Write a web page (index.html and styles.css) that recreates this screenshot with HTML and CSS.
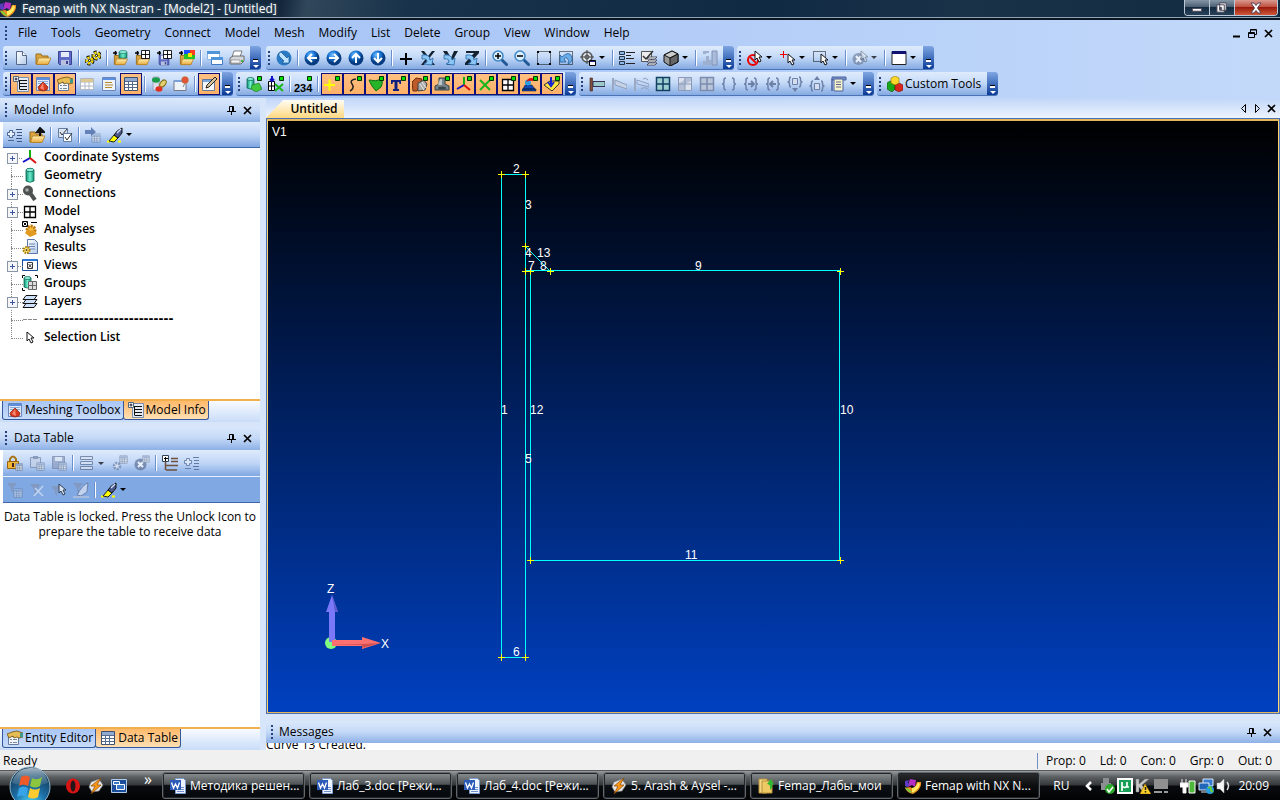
FILE: index.html
```html
<!DOCTYPE html>
<html lang="en">
<head>
<meta charset="utf-8">
<title>Femap with NX Nastran - [Model2] - [Untitled]</title>
<link rel="stylesheet" href="styles.css">
</head>
<body>
<svg class="defs" aria-hidden="true">
<defs>
<linearGradient id="g-fold" x2="0" y2="1"><stop offset="0" stop-color="#fff0b0"/><stop offset="1" stop-color="#e8a83c"/></linearGradient>
<radialGradient id="g-ball" cx=".4" cy=".3"><stop offset="0" stop-color="#7cc4ff"/><stop offset=".6" stop-color="#1470d0"/><stop offset="1" stop-color="#083c80"/></radialGradient>
<linearGradient id="g-cyl"><stop offset="0" stop-color="#128a70"/><stop offset=".5" stop-color="#6ff0d0"/><stop offset="1" stop-color="#128a70"/></linearGradient>
<linearGradient id="g-page" x2="1" y2="1"><stop offset="0" stop-color="#fff"/><stop offset="1" stop-color="#b4cbe8"/></linearGradient>
<radialGradient id="g-orb" cx=".5" cy=".95" r=".9"><stop offset="0" stop-color="#4fe0ff"/><stop offset=".45" stop-color="#1d70a8"/><stop offset="1" stop-color="#12304a"/></radialGradient>
<linearGradient id="g-shine" x2="0" y2="1"><stop offset="0" stop-color="#e8f4fa"/><stop offset="1" stop-color="#5f8aa6" stop-opacity=".4"/></linearGradient>
</defs>
<symbol id="folder" viewBox="0 0 16 16"><path d="M1 4h5l1 2h6v8H1z" fill="#d9a441" stroke="#9b6c14"/><path d="M3.500 8H16l-3 6.500H1.500z" fill="url(#g-fold)" stroke="#b07b20" stroke-width=".8"/></symbol>
<symbol id="disk" viewBox="0 0 16 16"><path d="M1.500 1.500h13v13h-12l-1-1z" fill="#5f6cc8" stroke="#3a428f"/><path d="M4 2h8v5H4z" fill="#e6ecfa"/><path d="M4 10h8v5H4z" fill="#b9c0dd"/><path d="M9 11h2v3H9z" fill="#3a428f"/></symbol>
<symbol id="minigrid" viewBox="0 0 10 10"><path d="M.5.5h9v9h-9zM5 .5v9M.5 5h9" fill="#fff" stroke="#000"/></symbol>
<symbol id="dot" viewBox="0 0 5 5"><path d="M.5.5h4v4h-4z" fill="#0d0" stroke="#030"/></symbol>
<symbol id="cursor" viewBox="0 0 9 13"><path d="M1 1v9l2-2 2 4 2-1-2-4h3z" fill="#fff" stroke="#111"/></symbol>
<symbol id="funnel" viewBox="0 0 10 10"><path d="M0 0h10L6 5v5L4 8V5z" fill="#8493b5"/></symbol>
<symbol id="new" viewBox="0 0 16 16"><path d="M3.500 1.500h6l4 4v9h-10z" fill="url(#g-page)" stroke="#56688a"/><path d="M9.500 1.500v4h4" fill="#fff" stroke="#56688a"/></symbol>
<symbol id="gears" viewBox="0 0 16 16"><g fill="none" stroke="#000" stroke-width="5" stroke-dasharray="2 1.200"><circle cx="4.500" cy="10.500" r="2.500"/><circle cx="11.500" cy="5.500" r="2.500"/></g><g fill="none" stroke="#f0d800" stroke-width="3.200" stroke-dasharray="2 1.200"><circle cx="4.500" cy="10.500" r="2.500"/><circle cx="11.500" cy="5.500" r="2.500"/></g><g fill="#fff" stroke="#000" stroke-width=".8"><circle cx="4.500" cy="10.500" r="1"/><circle cx="11.500" cy="5.500" r="1"/></g></symbol>
<symbol id="cyl" viewBox="0 0 16 16"><path d="M4 3v11q4 2.500 8 0V3" fill="url(#g-cyl)" stroke="#0a6a55" stroke-width=".8"/><ellipse cx="8" cy="3" rx="4" ry="1.700" fill="#8feedb" stroke="#0a6a55" stroke-width=".8"/></symbol>
<symbol id="cylopen" viewBox="0 0 16 16"><use href="#folder" y="2" width="15" height="14"/><path d="M6 2v6h8V2z" fill="url(#g-cyl)" stroke="#0a6a55" stroke-width=".6"/><ellipse cx="10" cy="2" rx="4" ry="1.500" fill="#8feedb" stroke="#0a6a55" stroke-width=".6"/><path d="M0 3h4M2.500 1v4" stroke="#000" stroke-width="1.500"/></symbol>
<symbol id="gridopen" viewBox="0 0 16 16"><use href="#folder" y="2" width="15" height="14"/><use href="#minigrid" x="6" y="0" width="9" height="9"/><path d="M0 3h4M2.500 1v4" stroke="#000" stroke-width="1.500"/></symbol>
<symbol id="gridsave" viewBox="0 0 16 16"><use href="#disk" x="1" y="4" width="12" height="12"/><use href="#minigrid" x="6" y="0" width="9" height="9"/><path d="M0 3h4M2.500 1v4" stroke="#000" stroke-width="1.500"/></symbol>
<symbol id="resopen" viewBox="0 0 16 16"><use href="#folder" y="2" width="15" height="14"/><path d="M5 0h11v9H5z" fill="#22c322"/><path d="M5 0h6v4H5z" fill="#1c4dff"/><path d="M11 0h5v5h-5z" fill="#ff3b1e"/><path d="M9 3h4v4H9z" fill="#ffe400"/><path d="M0 3h4M2.500 1v4" stroke="#000" stroke-width="1.500"/></symbol>
<symbol id="cascade" viewBox="0 0 16 16"><path d="M.5 1.500h12v8H.500z" fill="#fff" stroke="#8cb4e0"/><path d="M0 1h13v3H0z" fill="#4f94d8"/><path d="M4.500 7.500h11v7h-11z" fill="#fff" stroke="#3b7cc4"/><path d="M4 7h12v3H4z" fill="#4f94d8"/></symbol>
<symbol id="printer" viewBox="0 0 16 16"><path d="M5 1h8l-2 6H3z" fill="#fff" stroke="#666" stroke-width=".8"/><path d="M1 8l3-2h11v5l-3 3H1z" fill="#d3d6da" stroke="#555" stroke-width=".8"/><path d="M2 10h9v3H2z" fill="#f7f7f7" stroke="#777" stroke-width=".6"/><path d="M12 10h2v2h-2z" fill="#3ab53a"/></symbol>
<symbol id="pipe" viewBox="0 0 16 16"><circle cx="8" cy="8" r="7.500" fill="#2b7bc4"/><path d="M3 3l2-1 6 6 2-2v7H6l2-2-5-5z" fill="#bfe3ff" stroke="#17538f" stroke-width=".7"/></symbol>
<symbol id="aleft" viewBox="0 0 16 16"><circle cx="8" cy="8" r="7.500" fill="url(#g-ball)"/><path d="M13 8H5M8 4L4 8l4 4" fill="none" stroke="#fff" stroke-width="2"/></symbol>
<symbol id="aright" viewBox="0 0 16 16"><circle cx="8" cy="8" r="7.500" fill="url(#g-ball)"/><path d="M3 8h8M8 4l4 4-4 4" fill="none" stroke="#fff" stroke-width="2"/></symbol>
<symbol id="aup" viewBox="0 0 16 16"><circle cx="8" cy="8" r="7.500" fill="url(#g-ball)"/><path d="M8 13V5M4 8l4-4 4 4" fill="none" stroke="#fff" stroke-width="2"/></symbol>
<symbol id="adown" viewBox="0 0 16 16"><circle cx="8" cy="8" r="7.500" fill="url(#g-ball)"/><path d="M8 3v8M4 8l4 4 4-4" fill="none" stroke="#fff" stroke-width="2"/></symbol>
<symbol id="plus" viewBox="0 0 16 16"><path d="M2 9h12M8 3v12" stroke="#000" stroke-width="2"/></symbol>
<symbol id="swirl" viewBox="0 0 16 16"><path d="M2 5q8-1 8 5l3-2-1 7-8-1 3-2q0-4-5-3z" fill="#8cc6f5" stroke="#2668a8" stroke-width=".8"/></symbol>
<symbol id="rotx" viewBox="0 0 16 16"><path d="M1 1h3l11 14h-4zM12 1h3L4 15H1z" fill="#152231"/><use href="#swirl"/></symbol>
<symbol id="roty" viewBox="0 0 16 16"><path d="M1 1h4l4 7 3-7h4L8 15H5l2-4z" fill="#152231"/><use href="#swirl"/></symbol>
<symbol id="rotz" viewBox="0 0 16 16"><path d="M2 1h13v2L6 13h9v2H1v-2l9-10H2z" fill="#152231"/><use href="#swirl"/></symbol>
<symbol id="lens" viewBox="0 0 16 16"><path d="M9.500 9.500l5 5" stroke="#235a96" stroke-width="3" stroke-linecap="round"/><circle cx="6" cy="6" r="5" fill="#d9efff" stroke="#3d85c4" stroke-width="1.500"/></symbol>
<symbol id="zin" viewBox="0 0 16 16"><use href="#lens"/><path d="M3 6h6M6 3v6" stroke="#000" stroke-width="1.500"/></symbol>
<symbol id="zout" viewBox="0 0 16 16"><use href="#lens"/><path d="M3 6h6" stroke="#000" stroke-width="1.500"/></symbol>
<symbol id="zbox" viewBox="0 0 16 16"><path d="M1.500 1.500h13v13h-13z" fill="none" stroke="#000" stroke-dasharray="1 1"/><path d="M1 1h2v2H1zM13 1h2v2h-2zM1 13h2v2H1zM13 13h2v2h-2z" fill="#000"/></symbol>
<symbol id="zprev" viewBox="0 0 16 16"><path d="M1.500 1.500h13v13h-13z" fill="none" stroke="#000" stroke-dasharray="1 1"/><path d="M2 5l2 2q7-7 10 0 1 5-4 7 2-4-1-6-2-1-3 1l2 3H2z" fill="#69aee8" stroke="#17538f" stroke-width=".7"/></symbol>
<symbol id="target" viewBox="0 0 16 16"><circle cx="7" cy="7" r="5" fill="#dde5ee" stroke="#555" stroke-width="1.500"/><path d="M7 0v14M0 7h14" stroke="#444"/><circle cx="7" cy="7" r="2" fill="none" stroke="#444"/><path d="M9.500 10.500h6v5h-6z" fill="#fff" stroke="#000"/><path d="M10 11h5v1h-5z" fill="#228"/></symbol>
<symbol id="list" viewBox="0 0 16 16"><path d="M.5 1.500h5v3h-5zM.5 6.500h5v3h-5zM.5 11.500h5v3h-5z" fill="#8fb8e8" stroke="#234"/><path d="M7 2.500h9M7 5.500h5M7 8.500h8M7 13.500h9" stroke="#222"/></symbol>
<symbol id="layercheck" viewBox="0 0 16 16"><path d="M.5 1.500h10v10H.5z" fill="#eee" stroke="#555"/><path d="M2 6l3 3 7-8" fill="none" stroke="#333" stroke-width="1.500"/><path d="M8 7h8l-2 2H6zM8 10h8l-2 2H6zM8 13h8l-2 2H6z" fill="#fff" stroke="#334" stroke-width=".8"/></symbol>
<symbol id="cube" viewBox="0 0 16 16"><path d="M1 5l8-4 6 3v8l-8 4-6-4z" fill="#999" stroke="#111"/><path d="M1 5l6 3 8-4-6-3z" fill="#ccc" stroke="#111"/><path d="M7 8l8-4v8l-8 4z" fill="#666" stroke="#111"/></symbol>
<symbol id="post" viewBox="0 0 16 16"><path d="M1 1h6v2H4v3h3v4h2v5H1v-4h3V4H1z" fill="#9eb0cf"/><path d="M10 1h5v14h-5z" fill="#a9bbd8" stroke="#8294b8"/></symbol>
<symbol id="nosel" viewBox="0 0 16 16"><circle cx="6" cy="10" r="5" fill="none" stroke="#e00" stroke-width="2"/><path d="M3 7l6 6" stroke="#e00" stroke-width="2"/><use href="#cursor" x="7" width="9" height="13"/></symbol>
<symbol id="crosscur" viewBox="0 0 16 16"><path d="M0 4.500h7M3.500 1v7" stroke="#e00"/><use href="#cursor" x="7" y="3" width="9" height="13"/></symbol>
<symbol id="boxcur" viewBox="0 0 16 16"><path d="M.5 1.500h12v10H.5z" fill="none" stroke="#000" stroke-dasharray="1 1"/><use href="#cursor" x="7" y="3" width="9" height="13"/></symbol>
<symbol id="xcur" viewBox="0 0 16 16"><circle cx="6.500" cy="9" r="6" fill="#71839f"/><path d="M4 6l5 6M9 6l-5 6" stroke="#fff" stroke-width="2"/><use href="#cursor" x="8" opacity=".5" width="9" height="13"/></symbol>
<symbol id="win" viewBox="0 0 16 16"><path d="M1 1.500h14v13H1z" fill="#fff" stroke="#222"/><path d="M1 1h14v3H1z" fill="#101070"/></symbol>
<symbol id="tree" viewBox="0 0 16 16"><path d="M5 1.500h10.500v14H4.500V6" fill="#e4ebf5" stroke="#7d8fae"/><path d="M6.500 4v9.500M7 4.500h7M7 7.500h7M7 10.500h7M7 13.500h7" fill="none" stroke="#111"/><path d="M.5.5h5v5h-5z" fill="#fff" stroke="#567"/><path d="M1.500 3h3M3 1.500v3" stroke="#113"/></symbol>
<symbol id="drop" viewBox="0 0 16 16"><path d="M1.500 1.500h13v13h-13z" fill="#dfe9f8" stroke="#6a86b8"/><path d="M2 2h12v2H2z" fill="#5b8fe0"/><path d="M3 5.500h10M3 7.500h10" stroke="#8aa8d8"/><path d="M8 6l5 5-1 3-4 1-4-1-1-3z" fill="#d83a20" stroke="#8a1d0c" stroke-width=".7"/><path d="M8 7l1 7-4-2z" fill="#f5886e"/></symbol>
<symbol id="prop" viewBox="0 0 16 16"><path d="M1.500 6.500h10v8h-10z" fill="#f2f5fa" stroke="#667a99"/><path d="M3 9.500h2M6 9.500h4M3 12.500h2M6 12.500h4" stroke="#789"/><path d="M0 4l5-2 5-1 6 2v4l-4 1-2-1-3 1-1-2-4 2z" fill="#e6bd55" stroke="#6b4f10" stroke-width=".8"/><path d="M13 3h3v4h-3z" fill="#3f9a8a"/></symbol>
<symbol id="paletable" viewBox="0 0 16 16"><path d="M1.500 2.500h13v11h-13zM1.500 6h13M1.500 10h13M6 2.500v11M10 2.500v11" fill="#fff" stroke="#b0b8c4"/><path d="M2 3h12v3H2z" fill="#dcc890"/></symbol>
<symbol id="textlist" viewBox="0 0 16 16"><path d="M1.500 1.500h13v13h-13z" fill="#edf2fb" stroke="#6a86b8"/><path d="M2 2h12v2H2z" fill="#5b8fe0"/><path d="M4 6.500h7M4 9h8M4 11.500h7" stroke="#b28a28"/></symbol>
<symbol id="table" viewBox="0 0 16 16"><path d="M1.500 1.500h13v13h-13z" fill="#fff" stroke="#3c4f70"/><path d="M2 2h12v3H2z" fill="#8fa9d0"/><path d="M2 5.500h12M2 8.500h12M2 11.500h12M5.500 5v10M9.500 5v10" stroke="#566a8c"/></symbol>
<symbol id="beans" viewBox="0 0 16 16"><path d="M2 1h6v13H2z" fill="#dde" stroke="#88a" stroke-width=".6"/><ellipse cx="5" cy="4" rx="4" ry="2.800" fill="#1a9d4a"/><ellipse cx="12" cy="7.500" rx="4" ry="2.500" fill="#e3cf6b" stroke="#80701e" transform="rotate(-50 12 7.500)"/><ellipse cx="8" cy="13" rx="3.500" ry="2.800" fill="#e03020"/></symbol>
<symbol id="ballwin" viewBox="0 0 16 16"><path d="M1 4.500h12v10H1z" fill="#eef2f9" stroke="#778"/><path d="M1 4h12v2H1z" fill="#7aa0d8"/><path d="M12 7l-2 4" stroke="#888"/><circle cx="12" cy="4" r="3.500" fill="#e2543a" stroke="#992" stroke-width=".3"/></symbol>
<symbol id="pencil" viewBox="0 0 16 16"><path d="M1.500 3.500h12v11h-12z" fill="#f4f6fa" stroke="#667a99"/><path d="M2 4h11v2H2z" fill="#7ba6e0"/><path d="M5 12l1-3 8-8 2 2-8 8z" fill="#d6c39a" stroke="#222"/></symbol>
<symbol id="cylgreen" viewBox="0 0 16 16"><path d="M1 3v9q3 2 7 0V3" fill="url(#g-cyl)" stroke="#0a6a55" stroke-width=".8"/><ellipse cx="4.500" cy="3" rx="3.500" ry="1.500" fill="#8feedb" stroke="#0a6a55" stroke-width=".8"/><path d="M6 9l7-2 3 6-6 3-5-3z" fill="#40c840" stroke="#187018" stroke-width=".6"/><use href="#dot" x="11" width="5" height="5"/></symbol>
<symbol id="gridx" viewBox="0 0 16 16"><path d="M.5 5.500h6v9h-6zM.5 10h6M3.500 5.500v9" fill="#fff" stroke="#000"/><path d="M4 0v5M2 3l2 2 2-2" stroke="#11c" stroke-width="2" fill="none"/><path d="M7 8l8 7M15 8l-8 7" stroke="#18b818" stroke-width="2"/><use href="#dot" x="11" width="5" height="5"/></symbol>
<symbol id="yplus" viewBox="0 0 16 16"><path d="M0 9h11M5.500 3.500v11" stroke="#ff0" stroke-width="2"/><use href="#dot" x="11" width="5" height="5"/></symbol>
<symbol id="curve" viewBox="0 0 16 16"><path d="M10 3Q3 4 6 8t-2 7" fill="none" stroke="#222" stroke-width="1.500"/><use href="#dot" x="11" width="5" height="5"/></symbol>
<symbol id="surf" viewBox="0 0 16 16"><path d="M1 4q7 2 13-1 1 5-1 8l-5 4Q3 10 1 4z" fill="#28b428" stroke="#127012"/><use href="#dot" x="11" width="5" height="5"/></symbol>
<symbol id="tee" viewBox="0 0 16 16"><path d="M1 4h10v4H9.500L9 6H7.500v7H9v2H3v-2h1.500V6H3l-.5 2H1z" fill="#102080"/><use href="#dot" x="11" width="5" height="5"/></symbol>
<symbol id="solid" viewBox="0 0 16 16"><path d="M0 6l4-4 6 1-5 12H1z" fill="#bd5a28" stroke="#6a2c0e"/><path d="M6 7l6-3 3 4-2 6-7 1z" fill="#a9a9a9" stroke="#444"/><path d="M8 8l4 6M10 6l4 6" stroke="#eee"/><use href="#dot" x="11" width="5" height="5"/></symbol>
<symbol id="body" viewBox="0 0 16 16"><path d="M5 2h6v6l4 2v4H1v-4l4-2z" fill="#75838a" stroke="#39444a"/><path d="M6 3h2v6H4" fill="#b8c4ca"/><ellipse cx="8" cy="12" rx="4" ry="1.500" fill="#3a464c"/><use href="#dot" x="11" width="5" height="5"/></symbol>
<symbol id="triad" viewBox="0 0 16 16"><path d="M8 1v9" stroke="#12b012" stroke-width="2"/><path d="M8 9l-7 4" stroke="#11c" stroke-width="2"/><path d="M8 9l6 5" stroke="#d11" stroke-width="2"/></symbol>
<symbol id="triadd" viewBox="0 0 16 16"><use href="#triad"/><use href="#dot" x="11" width="5" height="5"/></symbol>
<symbol id="gx" viewBox="0 0 16 16"><path d="M2 4l10 10M12 4L2 14" stroke="#1bb51b" stroke-width="2"/><use href="#dot" x="11" width="5" height="5"/></symbol>
<symbol id="grid" viewBox="0 0 16 16"><path d="M2.500 3.500h11v11h-11zM8 3.500v11M2.500 9h11" fill="#fff" stroke="#000" stroke-width="1.300"/></symbol>
<symbol id="gridd" viewBox="0 0 16 16"><use href="#grid"/><use href="#dot" x="11" width="5" height="5"/></symbol>
<symbol id="load" viewBox="0 0 16 16"><path d="M0 13h14v2H0zM3 9h7l3 4H1z" fill="#1148b4" stroke="#012" stroke-width=".5"/><circle cx="6" cy="6.500" r="3" fill="#2b9de0"/><path d="M4 6q3-6 8-3l-1 2q-4-1-7 1z" fill="#e01010"/><use href="#dot" x="11" width="5" height="5"/></symbol>
<symbol id="laydown" viewBox="0 0 16 16"><path d="M0 9l6-4h9v3l-7 7z" fill="#ffe83a" stroke="#333"/><path d="M7 1v7M4 6l3 4 3-4" stroke="#1120d0" stroke-width="2" fill="none"/><use href="#dot" x="11" width="5" height="5"/></symbol>
<symbol id="beam" viewBox="0 0 16 16"><path d="M1 2h2.500v13H1z" fill="#80503c" stroke="#402010" stroke-width=".6"/><path d="M4 5.500h12v5H4z" fill="#9cc9c9" stroke="#335"/></symbol>
<symbol id="beam2" viewBox="0 0 16 16"><path d="M1 2h2v13H1z" fill="#9aa8c4"/><path d="M4 4l12 5v4L4 9z" fill="#c6d2e6" stroke="#8e9dbd"/></symbol>
<symbol id="beam3" viewBox="0 0 16 16"><path d="M1 2h2v13H1z" fill="#9aa8c4"/><path d="M4 4l12 4v3L4 8zM8 13q4-3 8 1M10 3q3-2 5 1" fill="none" stroke="#8e9dbd"/></symbol>
<symbol id="gteal" viewBox="0 0 16 16"><path d="M1.500 1.500h13v13h-13zM8 1.500v13M1.500 8h13" fill="#9ccfd0" stroke="#123f63" stroke-width="1.500"/></symbol>
<symbol id="contour" viewBox="0 0 16 16"><path d="M1.500 1.500h13v13h-13z" fill="#b3bfd4" stroke="#8c9aba"/><path d="M2 2h6q-2 4-6 5zM8 8l6-3v9H8z" fill="#dbe2ee"/><path d="M8 2v12M2 8h12" stroke="#8c9aba"/></symbol>
<symbol id="ggrey" viewBox="0 0 16 16"><path d="M1.500 1.500h13v13h-13zM8 1.500v13M1.500 8h13" fill="#b9c5d9" stroke="#7c8cae" stroke-width="1.500"/></symbol>
<symbol id="brace" viewBox="0 0 16 16"><path d="M5 2Q3 2 3 4v2q0 2-2 2 2 0 2 2v2q0 2 2 2M11 2q2 0 2 2v2q0 2 2 2-2 0-2 2v2q0 2-2 2" fill="none" stroke="#6d80a8" stroke-width="1.500"/></symbol>
<symbol id="bright" viewBox="0 0 16 16"><use href="#brace"/><path d="M5 8h5M8 5l3 3-3 3" fill="none" stroke="#6d80a8" stroke-width="2"/></symbol>
<symbol id="bleft" viewBox="0 0 16 16"><use href="#brace"/><path d="M11 8H6M8 5L5 8l3 3" fill="none" stroke="#6d80a8" stroke-width="2"/></symbol>
<symbol id="bdown" viewBox="0 0 16 16"><path d="M4 1Q2.500 1 2.500 3v1q0 2-2 2 2 0 2 2v1q0 2 1.500 2M12 1q1.500 0 1.500 2v1q0 2 2 2-2 0-2 2v1q0 2-1.500 2" fill="none" stroke="#6d80a8" stroke-width="1.500"/><path d="M5.500 2.500h5v6h-5z" fill="#d5deec" stroke="#6d80a8"/><path d="M5 12h6l-3 4z" fill="#6d80a8"/></symbol>
<symbol id="bup" viewBox="0 0 16 16"><path d="M4 5Q2.500 5 2.500 7v1q0 2-2 2 2 0 2 2v1q0 2 1.500 2M12 5q1.500 0 1.500 2v1q0 2 2 2-2 0-2 2v1q0 2-1.500 2" fill="none" stroke="#6d80a8" stroke-width="1.500"/><path d="M5.500 7.500h5v6h-5z" fill="#d5deec" stroke="#6d80a8"/><path d="M5 4h6L8 0z" fill="#6d80a8"/></symbol>
<symbol id="scroll" viewBox="0 0 16 16"><path d="M1 1h14v3H1z" fill="#7990cc" stroke="#4b62a0"/><path d="M3 3h9v12H3z" fill="#f4f3cc" stroke="#4b62a0"/><path d="M5 6h5M5 8.500h5M5 11h5" stroke="#668"/><path d="M1 3v12" stroke="#4b62a0" stroke-width="1.500"/></symbol>
<symbol id="blocks" viewBox="0 0 16 16"><path d="M0 7l3-2 5 2v6l-3 3-5-3z" fill="#18a818" stroke="#0a500a" stroke-width=".6"/><path d="M8 9l4-2 4 2v5l-4 2-4-2z" fill="#d8281c" stroke="#701008" stroke-width=".6"/><path d="M4 2l4-2 4 2v5L8 9 4 7z" fill="#ffd92a" stroke="#907008" stroke-width=".6"/></symbol>
<symbol id="expand" viewBox="0 0 16 16"><path d="M.5 5.500h2v-2h3v2h2v3h-2v2h-3v-2h-2zM1 13.500h6" fill="#e6effb" stroke="#4a6490"/><path d="M9 2.500h6M10 5.500h5M10 8.500h5M9 11.500h6M10 14.500h5" stroke="#3c5680"/></symbol>
<symbol id="upfold" viewBox="0 0 16 16"><use href="#folder" y="1"/><path d="M11 9V4M8 5l3-4 4 4z" fill="#111" stroke="#111" stroke-width="2"/></symbol>
<symbol id="checks" viewBox="0 0 16 16"><path d="M1.500 1.500h9v9h-9z" fill="#dce6f4" stroke="#667d9f"/><path d="M3 5l2 3 5-6" fill="none" stroke="#333"/><path d="M6.500 6.500h8v8h-8z" fill="#fff" stroke="#667d9f"/><path d="M8 10l2 3 5-7" fill="none" stroke="#333"/></symbol>
<symbol id="totable" viewBox="0 0 16 16"><path d="M0 3h6V0l5 5-5 4V7H0z" fill="#6480b8"/><use href="#table" x="6" y="6" width="10" height="10" opacity=".6"/></symbol>
<symbol id="marker" viewBox="0 0 16 16"><path d="M0 14.500h3M11 14.500h3" stroke="#ff0" stroke-width="2"/><path d="M2 14l5-6 4 3-4 4z" fill="#ff0" stroke="#222"/><path d="M7 8q3-5 8-7v5l-4 5z" fill="#4a588c" stroke="#111"/><path d="M10 6l4-4" stroke="#cfe0ff" stroke-width="1.500"/></symbol>
<symbol id="conn" viewBox="0 0 16 16"><circle cx="6" cy="5.500" r="5" fill="#4e5250"/><circle cx="5" cy="5" r="1.800" fill="#a5aaa8"/><path d="M8 8l5 7" stroke="#4e5250" stroke-width="4"/></symbol>
<symbol id="analysis" viewBox="0 0 16 16"><circle cx="9" cy="9" r="4" fill="#f4bc40" stroke="#c07a10" stroke-width="3" stroke-dasharray="2 1"/><path d="M3 12l5 4 7-3-2-3-8-1z" fill="#e09a20"/><path d="M.5.5h5v5h-5z" fill="#fff" stroke="#000"/><path d="M1.500 1.500l3 3M4.500 1.500l-3 3M9 1.500h6" stroke="#000"/></symbol>
<symbol id="results" viewBox="0 0 16 16"><path d="M5.500.5h7l3 3v11h-10z" fill="url(#g-page)" stroke="#5b76a8"/><path d="M7 5h6M7 7.500h6M7 10h6" stroke="#6a84b4"/><circle cx="4.500" cy="11" r="3" fill="#ffe978" stroke="#a87800" stroke-width="2" stroke-dasharray="1.500 1"/><circle cx="4.500" cy="11" r="1" fill="#543"/></symbol>
<symbol id="views" viewBox="0 0 16 16"><path d="M.5 2.500h15v11H.5z" fill="#fff" stroke="#1c4f9c"/><path d="M1 2h14v2H1z" fill="#2d77d8"/><path d="M5.500 5.500h5v6h-5zM6.500 7l3 3.500M9.500 7l-3 3.500" fill="none" stroke="#222" stroke-width=".9"/></symbol>
<symbol id="groups" viewBox="0 0 16 16"><path d="M2 3v9q3 2 7 0V3" fill="url(#g-cyl)" stroke="#0a6a55" stroke-width=".8"/><ellipse cx="5.500" cy="3" rx="3.500" ry="1.500" fill="#8feedb" stroke="#0a6a55" stroke-width=".8"/><path d="M6.500 6.500h8v8h-8zM10.500 6.500v8M6.500 10.500h8" fill="#ddd" stroke="#666"/><path d="M.5 3V.5H3M13 .5h2.500V3M.5 13v2.500H3" fill="none" stroke="#000"/></symbol>
<symbol id="layers" viewBox="0 0 16 16"><g fill="#cfe0fa" stroke="#111"><path d="M4 10.500h11l-3 4H1z"/><path d="M4 6.500h11l-3 4H1z"/><path d="M4 2.500h11l-3 4H1z"/></g></symbol>
<symbol id="dashes" viewBox="0 0 16 16"><path d="M1 8.500h14" stroke="#888" stroke-dasharray="4 1"/></symbol>
<symbol id="selcur" viewBox="0 0 16 16"><use href="#cursor" x="4" y="2" width="9" height="13"/></symbol>
<symbol id="lock" viewBox="0 0 16 16"><path d="M3 7V4q3-5 6 0v3" fill="none" stroke="#a87414" stroke-width="2"/><path d="M.5 6.500h11v7H.5z" fill="#f2b737" stroke="#95640c"/><path d="M6 8v4" stroke="#422" stroke-width="2"/><use href="#table" x="8" y="8" width="8" height="8"/></symbol>
<symbol id="paste" viewBox="0 0 16 16"><path d="M1.500 2.500h10v10h-10z" fill="#c3cfe4" stroke="#6f80a5"/><path d="M4 1h5v3H4z" fill="#6f80a5"/><use href="#table" x="7" y="7" width="9" height="9"/></symbol>
<symbol id="savet" viewBox="0 0 16 16"><path d="M1.500 1.500h12v12h-12z" fill="#8c9cbd" stroke="#6f80a5"/><path d="M4 2h7v4H4z" fill="#e2e9f4"/><use href="#table" x="7" y="7" width="9" height="9"/></symbol>
<symbol id="rows" viewBox="0 0 16 16"><path d="M1.500 1.500h12v3h-12zM1.500 6.500h12v3h-12zM1.500 11.500h12v3h-12z" fill="#dbe4f2" stroke="#55688f"/></symbol>
<symbol id="gearT" viewBox="0 0 16 16"><circle cx="5" cy="11" r="3" fill="#dfe6f2" stroke="#6f80a5" stroke-width="2.500" stroke-dasharray="2 1"/><use href="#table" x="7" y="0" width="9" height="9"/></symbol>
<symbol id="xT" viewBox="0 0 16 16"><circle cx="6.500" cy="9.500" r="6" fill="#5f7298"/><path d="M4 7l5 5M9 7l-5 5" stroke="#fff" stroke-width="2"/><use href="#table" x="8" y="0" width="8" height="8"/></symbol>
<symbol id="treeadd" viewBox="0 0 16 16"><path d="M3.500 6v9M4 10.500h12M4 15h11M9 3.500h7M9 6.500h7" stroke="#6e503c" stroke-width="1.500"/><path d="M.5.500h6v6h-6z" fill="#fff" stroke="#345"/><path d="M2 3.500h4M3.500 2v4" stroke="#000"/></symbol>
<symbol id="ft" viewBox="0 0 16 16"><use href="#funnel" y="1" width="10" height="10"/><use href="#table" x="6" y="6" width="10" height="10" opacity=".7"/></symbol>
<symbol id="fx" viewBox="0 0 16 16"><use href="#funnel" x="1" y="2" width="11" height="11"/><path d="M6 6l8 8M14 4L5 14" stroke="#dfe8f6" stroke-width="1.500"/></symbol>
<symbol id="fc" viewBox="0 0 16 16"><use href="#funnel" y="4" width="10" height="10"/><use href="#cursor" x="7" y="1" width="9" height="13"/></symbol>
<symbol id="fm" viewBox="0 0 16 16"><use href="#funnel" x="0" y="1" width="10" height="10"/><path d="M4 13q6-11 11-12l-1 9-6 4z" fill="#dce5f2" stroke="#5f7095"/><path d="M0 15h16" stroke="#b8c6de" stroke-width="2"/></symbol>
<symbol id="pin" viewBox="0 0 9 9"><path d="M2.500.5h4v5h-4zM0 5.500h9M4.500 6v3M5.500 1v4" fill="none" stroke="#000"/></symbol>
<symbol id="x" viewBox="0 0 9 9"><path d="M1 1l7 7M8 1L1 8" stroke="#000" stroke-width="1.700"/></symbol>
<symbol id="femap" viewBox="0 0 16 16"><path d="M0 10l5-1 4 2 3-7 4 0q1 7-8 12-6-1-8-6z" fill="#f08c1a"/><path d="M7 10q5-1 6-6l2 2q-1 6-8 9z" fill="#ffe95c"/><path d="M0 9l4 2 4 4-4-1q-3-2-4-5z" fill="#7cc83c"/><path d="M4 4l1-3 6 1-1 7-3-2-4 2-2-2 3-2z" fill="#b52fc4"/><path d="M0 3l4-1-1 3 2 1-3 3-2-1z" fill="#5a3cc0"/></symbol>
<symbol id="word" viewBox="0 0 16 16"><path d="M5.500.5h8l2 2v13h-10z" fill="#eef4ff" stroke="#7b9bd0"/><path d="M7 9.500h7M7 11.500h7M7 13.500h7" stroke="#6f8fca"/><path d="M0 2h11v10H0z" fill="#2c5bb8"/><path d="M1.500 4.500L3.500 10l2-4 2 4 2-5.500" fill="none" stroke="#fff" stroke-width="1.300"/></symbol>
<symbol id="amp" viewBox="0 0 16 16"><path d="M3 4l8-3 4 6-4 6-7 1-3-5z" fill="#e6e6e6" stroke="#777" stroke-width=".7"/><path d="M13 0L3 8h4L3 16l10-9H9z" fill="#ff9a18" stroke="#8a4600" stroke-width=".7"/></symbol>
<symbol id="upfolder" viewBox="0 0 16 16"><path d="M1 1h8v14H1z" fill="#f5d885" stroke="#b8903a"/><path d="M4 3h10v12H4z" fill="#efc964" stroke="#b8903a"/><path d="M12 12q1-6-3-6l4-5 3 6-2-1q1 4-2 6z" fill="#30b830"/></symbol>
<symbol id="opera" viewBox="0 0 16 16"><ellipse cx="8" cy="8" rx="7" ry="7.500" fill="#d81414"/><ellipse cx="8" cy="8" rx="2.500" ry="5.500" fill="#251518"/></symbol>
<symbol id="switch" viewBox="0 0 16 16"><path d="M.5 1.500h15v13H.5z" fill="#1b4d9a" stroke="#aecbea"/><path d="M2.500 3.500h6v3h-6zM5.500 6.500h8v5h-8z" fill="#3c78c8" stroke="#fff"/></symbol>
<symbol id="usb" viewBox="0 0 16 16"><path d="M4 0h6v5H4zM2 5h10v7H2z" fill="#8b8e92"/><circle cx="11" cy="11" r="5" fill="#2cab2c"/><path d="M8 11l2 3 4-5" fill="none" stroke="#fff" stroke-width="1.500"/></symbol>
<symbol id="mu" viewBox="0 0 16 16"><path d="M1 1h14v14H1z" fill="#18a058" stroke="#fff" stroke-width="2"/><path d="M5 4v9M5 8q3 3 5 0M10 4v5h2" fill="none" stroke="#fff" stroke-width="1.700"/></symbol>
<symbol id="kav" viewBox="0 0 16 16"><path d="M1 1h3v5l6-5h4L7 7l5 7H8L4 9v5H1z" fill="#c6c6c6" stroke="#777" stroke-width=".5"/><path d="M10 6l6 10H5z" fill="#ffd12a" stroke="#a77900" stroke-width=".6"/><path d="M10.500 9v3M10.500 13v1.500" stroke="#222" stroke-width="1.500"/></symbol>
<symbol id="screen" viewBox="0 0 16 16"><path d="M1 1h14v10H1z" fill="#909090"/><path d="M1 14h8M11 14h4" stroke="#999" stroke-width="2"/></symbol>
<symbol id="power" viewBox="0 0 16 16"><path d="M2 1v4M6 1v4M0 5h8v4H6v6H3V9H0z" fill="#fff" stroke="#eee"/><path d="M9 3h6v12H9z" fill="#4db83a" stroke="#fff"/></symbol>
<symbol id="net" viewBox="0 0 16 16"><path d="M5 1h10v7H5z" fill="#377bd0" stroke="#dbe9fa"/><path d="M1 5h10v7H1zM3 14h6" fill="#2266b8" stroke="#dbe9fa"/><circle cx="12" cy="12" r="4" fill="#289de0"/><path d="M10 10q3-2 3 1t2 2" stroke="#6c3" stroke-width="2" fill="none"/></symbol>
<symbol id="vol" viewBox="0 0 16 16"><path d="M1 5h3l4-4v14l-4-4H1z" fill="#f5f5f5" stroke="#bbb" stroke-width=".5"/><path d="M11 4q3 4 0 8" stroke="#ddd" fill="none" stroke-width="1.500"/></symbol>
</svg>

<div class="app">
<header class="title">
  <svg class="ic"><use href="#femap"/></svg>
  <h1>Femap with NX Nastran - [Model2] - [Untitled]</h1>
  <div class="caption">
    <button aria-label="Minimize"><svg viewBox="0 0 26 14"><path d="M8 7.500h10v3H8z" fill="#fff" stroke="#445"/></svg></button>
    <button aria-label="Restore"><svg viewBox="0 0 26 14"><path d="M10.500 1.500h7v8h-7zM7.500 3.500h8v8h-8z" fill="#f4f4f4" stroke="#445"/><path d="M10.500 6.500h2v2h-2z" fill="#567" stroke="#445"/></svg></button>
    <button class="close" aria-label="Close"><svg viewBox="0 0 26 14"><path d="M8 2h3l2 2.500L15 2h3l-3.500 5 3.500 5h-3l-2-2.500L11 12H8l3.500-5z" fill="#fff" stroke="#545"/></svg></button>
  </div>
</header>

<nav class="menu">
  <i class="grip"></i>
  <button>File</button><button>Tools</button><button>Geometry</button><button>Connect</button><button>Model</button><button>Mesh</button><button>Modify</button><button>List</button><button>Delete</button><button>Group</button><button>View</button><button>Window</button><button>Help</button>
  <div class="mdi">
    <button aria-label="Minimize document"><svg viewBox="0 0 9 9"><path d="M1 7.500h7" stroke="#000" stroke-width="2"/></svg></button>
    <button aria-label="Restore document"><svg viewBox="0 0 9 9"><path d="M2.500 3V.5h6v5H7M.5 3.500h6v5h-6zM2 1h6M1 4.500h5" fill="none" stroke="#000"/></svg></button>
    <button aria-label="Close document"><svg><use href="#x"/></svg></button>
  </div>
</nav>

<div class="bars">
 <div class="barrow">
  <div class="bar">
   <i class="grip"></i>
   <button class="tb" aria-label="New"><svg><use href="#new"/></svg></button>
   <button class="tb" aria-label="Open"><svg><use href="#folder"/></svg></button>
   <button class="tb" aria-label="Save"><svg><use href="#disk"/></svg></button>
   <i class="sep"></i>
   <button class="tb" aria-label="Preferences"><svg><use href="#gears"/></svg></button>
   <i class="sep"></i>
   <button class="tb" aria-label="Import geometry"><svg><use href="#cylopen"/></svg></button>
   <button class="tb" aria-label="Import model"><svg><use href="#gridopen"/></svg></button>
   <button class="tb" aria-label="Export model"><svg><use href="#gridsave"/></svg></button>
   <button class="tb" aria-label="Import results"><svg><use href="#resopen"/></svg></button>
   <i class="sep"></i>
   <button class="tb" aria-label="Windows"><svg><use href="#cascade"/></svg></button>
   <button class="tb" aria-label="Print"><svg><use href="#printer"/></svg></button>
   <button class="cap" aria-label="More standard buttons"></button>
  </div>
  <div class="bar gap">
   <i class="grip"></i>
   <button class="tb" aria-label="Redraw"><svg><use href="#pipe"/></svg></button>
   <i class="sep"></i>
   <button class="tb" aria-label="Pan left"><svg><use href="#aleft"/></svg></button>
   <button class="tb" aria-label="Pan right"><svg><use href="#aright"/></svg></button>
   <button class="tb" aria-label="Pan up"><svg><use href="#aup"/></svg></button>
   <button class="tb" aria-label="Pan down"><svg><use href="#adown"/></svg></button>
   <i class="sep"></i>
   <button class="tb" aria-label="Center"><svg><use href="#plus"/></svg></button>
   <button class="tb" aria-label="Rotate X"><svg><use href="#rotx"/></svg></button>
   <button class="tb" aria-label="Rotate Y"><svg><use href="#roty"/></svg></button>
   <button class="tb" aria-label="Rotate Z"><svg><use href="#rotz"/></svg></button>
   <i class="sep"></i>
   <button class="tb" aria-label="Zoom in"><svg><use href="#zin"/></svg></button>
   <button class="tb" aria-label="Zoom out"><svg><use href="#zout"/></svg></button>
   <button class="tb" aria-label="Zoom box"><svg><use href="#zbox"/></svg></button>
   <button class="tb" aria-label="Unzoom"><svg><use href="#zprev"/></svg></button>
   <button class="tb dd" aria-label="Orient"><svg><use href="#target"/></svg></button>
   <i class="sep"></i>
   <button class="tb" aria-label="View options"><svg><use href="#list"/></svg></button>
   <button class="tb" aria-label="Visibility"><svg><use href="#layercheck"/></svg></button>
   <button class="tb dd" aria-label="View style"><svg><use href="#cube"/></svg></button>
   <i class="sep"></i>
   <button class="tb" aria-label="Post options"><svg><use href="#post"/></svg></button>
   <button class="cap" aria-label="More view buttons"></button>
  </div>
  <div class="bar">
   <i class="grip"></i>
   <button class="tb dd" aria-label="Selector"><svg><use href="#nosel"/></svg></button>
   <button class="tb dd" aria-label="Snap mode"><svg><use href="#crosscur"/></svg></button>
   <button class="tb dd" aria-label="Pick mode"><svg><use href="#boxcur"/></svg></button>
   <i class="sep"></i>
   <button class="tb dd off" aria-label="Clear selection"><svg><use href="#xcur"/></svg></button>
   <i class="sep"></i>
   <button class="tb dd" aria-label="Dialog"><svg><use href="#win"/></svg></button>
   <button class="cap" aria-label="More select buttons"></button>
  </div>
 </div>
 <div class="barrow">
  <div class="bar">
   <i class="grip"></i>
   <button class="tb on" aria-label="Model Info pane"><svg><use href="#tree"/></svg></button>
   <button class="tb on" aria-label="Meshing Toolbox pane"><svg><use href="#drop"/></svg></button>
   <button class="tb on" aria-label="Entity Editor pane"><svg><use href="#prop"/></svg></button>
   <button class="tb" aria-label="Program window"><svg><use href="#paletable"/></svg></button>
   <button class="tb" aria-label="API window"><svg><use href="#textlist"/></svg></button>
   <button class="tb on" aria-label="Data Table pane"><svg><use href="#table"/></svg></button>
   <i class="sep"></i>
   <button class="tb" aria-label="Colors"><svg><use href="#beans"/></svg></button>
   <button class="tb" aria-label="Macro"><svg><use href="#ballwin"/></svg></button>
   <i class="sep"></i>
   <button class="tb on" aria-label="Messages pane"><svg><use href="#pencil"/></svg></button>
   <button class="cap" aria-label="More pane buttons"></button>
  </div>
  <div class="bar">
   <i class="grip"></i>
   <button class="tb" aria-label="Toggle geometry"><svg><use href="#cylgreen"/></svg></button>
   <button class="tb" aria-label="Toggle mesh"><svg><use href="#gridx"/></svg></button>
   <i class="sep"></i>
   <button class="tb num" aria-label="Toggle labels"><svg><use href="#dot" x="11" width="5" height="5"/></svg><b>234</b></button>
   <i class="sep"></i>
   <button class="tb on" aria-label="Points"><svg><use href="#yplus"/></svg></button>
   <button class="tb on" aria-label="Curves"><svg><use href="#curve"/></svg></button>
   <button class="tb on" aria-label="Surfaces"><svg><use href="#surf"/></svg></button>
   <button class="tb on" aria-label="Text"><svg><use href="#tee"/></svg></button>
   <button class="tb on" aria-label="Boundaries"><svg><use href="#solid"/></svg></button>
   <button class="tb on" aria-label="Solids"><svg><use href="#body"/></svg></button>
   <button class="tb on" aria-label="Coordinate systems"><svg><use href="#triadd"/></svg></button>
   <button class="tb on" aria-label="Nodes"><svg><use href="#gx"/></svg></button>
   <button class="tb on" aria-label="Elements"><svg><use href="#gridd"/></svg></button>
   <button class="tb on" aria-label="Constraints"><svg><use href="#load"/></svg></button>
   <button class="tb on" aria-label="Loads"><svg><use href="#laydown"/></svg></button>
   <button class="cap" aria-label="More entity buttons"></button>
  </div>
  <div class="bar">
   <i class="grip"></i>
   <button class="tb" aria-label="Undeformed"><svg><use href="#beam"/></svg></button>
   <button class="tb" aria-label="Deformed"><svg><use href="#beam2"/></svg></button>
   <button class="tb" aria-label="Animate"><svg><use href="#beam3"/></svg></button>
   <button class="tb" aria-label="No contour"><svg><use href="#gteal"/></svg></button>
   <button class="tb" aria-label="Contour"><svg><use href="#contour"/></svg></button>
   <button class="tb" aria-label="Criteria"><svg><use href="#ggrey"/></svg></button>
   <button class="tb" aria-label="Output set"><svg><use href="#brace"/></svg></button>
   <button class="tb" aria-label="Next output"><svg><use href="#bright"/></svg></button>
   <button class="tb" aria-label="Previous output"><svg><use href="#bleft"/></svg></button>
   <button class="tb" aria-label="Next vector"><svg><use href="#bdown"/></svg></button>
   <button class="tb" aria-label="Previous vector"><svg><use href="#bup"/></svg></button>
   <button class="tb dd" aria-label="Post list"><svg><use href="#scroll"/></svg></button>
   <button class="cap" aria-label="More post buttons"></button>
  </div>
  <div class="bar">
   <i class="grip"></i>
   <button class="tb custom"><svg><use href="#blocks"/></svg>Custom Tools</button>
   <button class="cap" aria-label="More custom buttons"></button>
  </div>
 </div>
</div>

<div class="work">
 <aside class="side">
  <section class="pane">
   <div class="phead"><i class="grip"></i><h2>Model Info</h2><button aria-label="Pin Model Info"><svg><use href="#pin"/></svg></button><button aria-label="Close Model Info"><svg><use href="#x"/></svg></button></div>
   <div class="ptools">
    <button class="tb" aria-label="Expand"><svg><use href="#expand"/></svg></button>
    <button class="tb" aria-label="Up folder"><svg><use href="#upfold"/></svg></button>
    <i class="sep"></i>
    <button class="tb" aria-label="Check items"><svg><use href="#checks"/></svg></button>
    <i class="sep"></i>
    <button class="tb" aria-label="Send to table"><svg><use href="#totable"/></svg></button>
    <button class="tb dd" aria-label="Highlight"><svg><use href="#marker"/></svg></button>
   </div>
   <ul class="tree">
    <li class="exp"><svg><use href="#triad"/></svg>Coordinate Systems</li>
    <li><svg><use href="#cyl"/></svg>Geometry</li>
    <li class="exp"><svg><use href="#conn"/></svg>Connections</li>
    <li class="exp"><svg><use href="#grid"/></svg>Model</li>
    <li><svg><use href="#analysis"/></svg>Analyses</li>
    <li><svg><use href="#results"/></svg>Results</li>
    <li class="exp"><svg><use href="#views"/></svg>Views</li>
    <li><svg><use href="#groups"/></svg>Groups</li>
    <li class="exp"><svg><use href="#layers"/></svg>Layers</li>
    <li class="rule"><svg><use href="#dashes"/></svg>--------------------------</li>
    <li><svg><use href="#selcur"/></svg>Selection List</li>
   </ul>
   <div class="tabs"><button><svg><use href="#drop"/></svg>Meshing Toolbox</button><button class="act"><svg><use href="#tree"/></svg>Model Info</button></div>
  </section>
  <section class="pane data">
   <div class="phead"><i class="grip"></i><h2>Data Table</h2><button aria-label="Pin Data Table"><svg><use href="#pin"/></svg></button><button aria-label="Close Data Table"><svg><use href="#x"/></svg></button></div>
   <div class="ptools tall">
    <button class="tb" aria-label="Unlock"><svg><use href="#lock"/></svg></button>
    <button class="tb off" aria-label="Paste"><svg><use href="#paste"/></svg></button>
    <button class="tb off" aria-label="Save table"><svg><use href="#savet"/></svg></button>
    <i class="sep"></i>
    <button class="tb dd off" aria-label="Rows"><svg><use href="#rows"/></svg></button>
    <button class="tb off" aria-label="Table options"><svg><use href="#gearT"/></svg></button>
    <button class="tb off" aria-label="Clear table"><svg><use href="#xT"/></svg></button>
    <i class="sep"></i>
    <button class="tb" aria-label="Add level"><svg><use href="#treeadd"/></svg></button>
    <button class="tb off" aria-label="Expand rows"><svg><use href="#expand"/></svg></button>
   </div>
   <div class="ptools flat">
    <button class="tb off" aria-label="Filter table"><svg><use href="#ft"/></svg></button>
    <button class="tb off" aria-label="Clear filter"><svg><use href="#fx"/></svg></button>
    <button class="tb off" aria-label="Filter pick"><svg><use href="#fc"/></svg></button>
    <button class="tb off" aria-label="Filter highlight"><svg><use href="#fm"/></svg></button>
    <i class="sep"></i>
    <button class="tb dd" aria-label="Highlight rows"><svg><use href="#marker"/></svg></button>
   </div>
   <p class="note">Data Table is locked. Press the Unlock Icon to prepare the table to receive data</p>
   <div class="tabs"><button><svg><use href="#prop"/></svg>Entity Editor</button><button class="act"><svg><use href="#table"/></svg>Data Table</button></div>
  </section>
 </aside>

 <main class="main">
  <div class="doctabs">
   <button class="doctab">Untitled</button>
   <div class="docnav">
    <button aria-label="Previous tab"><svg viewBox="0 0 9 9"><path d="M6.500.5v8l-4-4z" fill="none" stroke="#000"/></svg></button>
    <button aria-label="Next tab"><svg viewBox="0 0 9 9"><path d="M2.500.5v8l4-4z" fill="none" stroke="#000"/></svg></button>
    <button aria-label="Close tab"><svg><use href="#x"/></svg></button>
   </div>
  </div>
  <div class="view">
   <svg class="model" role="img" aria-label="Model view">
    <g transform="translate(-268 -121)">
     <g class="curves">
      <path d="M501.500 174V657M525.500 174V657M501 174.500H526M501 657.500H526M525 270.500H840M530.500 271V560M530 560.500H840M839.500 271V560M525.500 246.500L550.500 271.500"/>
     </g>
     <path class="points" d="M498 174.500h7M501.500 171v7M522 174.500h7M525.500 171v7M522 246.500h7M525.500 243v7M522 271.500h7M525.500 268v7M527 271.500h7M530.500 268v7M547 271.500h7M550.500 268v7M837 271.500h7M840.500 268v7M527 560.500h7M530.500 557v7M837 560.500h7M840.500 557v7M498 657.500h7M501.500 654v7M522 657.500h7M525.500 654v7"/>
     <g class="labels">
      <text x="272" y="136">V1</text>
      <text x="513" y="173">2</text><text x="525" y="209">3</text><text x="525" y="257">4</text><text x="537" y="257">13</text>
      <text x="528" y="270">7</text><text x="540" y="270">8</text><text x="695" y="270">9</text><text x="501" y="414">1</text>
      <text x="530" y="414">12</text><text x="840" y="414">10</text><text x="525" y="463">5</text><text x="685" y="559">11</text><text x="513" y="656">6</text>
      <text x="327" y="593">Z</text><text x="381" y="648">X</text>
     </g>
     <circle cx="331" cy="643" r="6" fill="#80ff80"/>
     <path d="M329 642V612h-3l6-17 6 17h-3v30z" fill="#7878f8"/><path d="M335 612h3l-6-17z" fill="#5c5ccc"/>
     <path d="M332 640h30v-3l19 6-19 6v-3h-30z" fill="#ff7070"/><path d="M332 645h30v3l18-5-18 1z" fill="#d05050"/>
    </g>
   </svg>
  </div>
  <section class="messages">
   <div class="phead"><i class="grip"></i><h2>Messages</h2><button aria-label="Pin Messages"><svg><use href="#pin"/></svg></button><button aria-label="Close Messages"><svg><use href="#x"/></svg></button></div>
   <div class="log"><p>Curve 13 Created.</p></div>
  </section>
 </main>
</div>

<footer class="status"><span class="ready">Ready</span><div class="counts"><span>Prop: 0</span><span>Ld: 0</span><span>Con: 0</span><span>Grp: 0</span><span>Out: 0</span></div></footer>

<div class="task">
 <button class="orb" aria-label="Start"><svg viewBox="0 0 42 42"><circle cx="21" cy="21" r="20" fill="url(#g-orb)" stroke="#8fb3c8"/><path d="M3 17Q6 3 21 2t18 15q-18 6-36 0z" fill="url(#g-shine)" opacity=".7"/><path d="M12 11q4-3 9 0l-2 9q-5-3-9 0z" fill="#ef5a28"/><path d="M23 12q5 3 10-1l-2 9q-5 3-10 0z" fill="#8cc63e"/><path d="M10 22q4-3 9 0l-2 9q-5-3-9 0z" fill="#38a4e8"/><path d="M21 22q5 3 10 0l-2 9q-5 3-10 0z" fill="#ffcb2e"/></svg></button>
 <div class="quick">
  <button aria-label="Opera"><svg><use href="#opera"/></svg></button>
  <button aria-label="Player"><svg><use href="#amp"/></svg></button>
  <button aria-label="Switch windows"><svg><use href="#switch"/></svg></button>
  <button class="more">»</button>
 </div>
 <div class="tasks">
  <button><svg><use href="#word"/></svg>Методика решен...</button>
  <button><svg><use href="#word"/></svg>Лаб_3.doc [Режи...</button>
  <button><svg><use href="#word"/></svg>Лаб_4.doc [Режи...</button>
  <button><svg><use href="#amp"/></svg>5. Arash &amp; Aysel -...</button>
  <button><svg><use href="#upfolder"/></svg>Femap_Лабы_мои</button>
  <button class="cur"><svg><use href="#femap"/></svg>Femap with NX N...</button>
 </div>
 <div class="tray">
  <span class="lang">RU</span>
  <button aria-label="Show hidden icons"><svg viewBox="0 0 16 16"><path d="M10 4L6 8l4 4" fill="none" stroke="#fff" stroke-width="2.500"/></svg></button>
  <svg><use href="#usb"/></svg><svg><use href="#mu"/></svg><svg><use href="#kav"/></svg><svg><use href="#screen"/></svg>
  <svg class="brk"><use href="#power"/></svg><svg><use href="#net"/></svg><svg><use href="#vol"/></svg>
  <time>20:09</time>
 </div>
</div>
</div>
</body>
</html>
```
FILE: styles.css
```css
* { box-sizing: border-box; }
body { margin: 0; font: 12px/16px "Open Sans", "Noto Sans", sans-serif; color: #000; }
button { font: inherit; color: inherit; border: 0; padding: 0; margin: 0; background: none; white-space: nowrap; }
h1, h2, p, ul { margin: 0; padding: 0; font-size: 12px; font-weight: 400; }
svg { width: 16px; height: 16px; flex: none; display: block; }
.defs { position: absolute; width: 0; height: 0; }
.app { height: 100vh; display: flex; flex-direction: column; overflow: hidden; background: #bdd4f8; }

.title { height: 20px; display: flex; align-items: center; gap: 6px; color: #fff; background: linear-gradient(100deg, #15293f, #1d3a52 8%, #14273c 22%, #31475a 24%, #17324a 32%, #112a44 60%, #1a3248 75%, #102a40); border-bottom: 2px solid #0a1520; box-shadow: inset 0 -1px #8fa3b4; }
.title h1 { flex: 1; text-shadow: 0 0 3px #6a8090; }
.caption { display: flex; align-self: flex-start; margin-right: 2px; border: 1px solid #b9c8d4; border-top: 0; border-radius: 0 0 4px 4px; overflow: hidden; }
.caption button { width: 25px; height: 15px; background: linear-gradient(#8696a6, #4c6074 45%, #132a40 50%, #27425a); border-right: 1px solid #b9c8d4; }
.caption svg { width: 100%; height: 14px; }
.caption .close { width: 42px; border: 0; background: linear-gradient(#d99a90, #c0503f 45%, #9a1c0c 50%, #d0583a); }

.menu { height: 26px; display: flex; align-items: center; padding: 0 7px 0 5px; background: linear-gradient(90deg, #9fbff5, #c3d9fa); }
.menu > button { padding: 0 7px; }
.menu .grip { margin-right: 4px; }
.mdi { margin-left: auto; display: flex; gap: 7px; }
.mdi svg, .phead svg, .docnav svg { width: 9px; height: 9px; }
.grip { flex: none; width: 2px; height: 14px; background: repeating-linear-gradient(#27417c 0 2px, transparent 2px 4px); }

.bars { background: linear-gradient(90deg, #9fbff5, #c3d9fa); padding-left: 3px; }
.barrow { display: flex; height: 26px; gap: 3px; }
.bar { height: 24px; display: flex; align-items: center; padding-left: 2px; border-radius: 3px; background: linear-gradient(#dfebfc, #c6dbf8 45%, #85aae2); border-bottom: 1px solid #4a74b6; }
.bar.gap { margin-left: 2px; }
.bar .grip { margin-right: 3px; }
.tb { position: relative; width: 22px; height: 22px; flex: none; display: flex; align-items: center; padding-left: 3px; }
.tb.on { background: linear-gradient(#ffc184, #ffb066); outline: 1px solid #10107c; outline-offset: -1px; }
.tb.dd { width: 33px; gap: 3px; }
.tb.dd::after { content: ""; border: 3px solid transparent; border-top-color: #000; margin-top: 3px; }
.tb.off { opacity: .7; }
.tb.custom { width: auto; padding: 0 4px 0 3px; gap: 2px; }
.tb.num b { position: absolute; left: 1px; bottom: 1px; font: 700 11px/12px "Liberation Sans", sans-serif; }
.sep { flex: none; width: 2px; height: 16px; margin: 0 2px; background: linear-gradient(90deg, #6a8fce 50%, #fff 50%); }
.cap { position: relative; align-self: stretch; width: 11px; margin-left: 2px; border-radius: 0 3px 3px 0; background: linear-gradient(#7fa6e2, #3e6cbb 55%, #0a3a96); }
.cap::before { content: ""; position: absolute; left: 3px; bottom: 7px; width: 5px; height: 2px; background: #fff; box-shadow: 0 -1px #000; }
.cap::after { content: ""; position: absolute; left: 3px; bottom: 1px; border: 3px solid transparent; border-top-color: #fff; border-bottom: 0; }

.work { flex: 1; min-height: 0; display: flex; }
.side { width: 260px; flex: none; display: flex; flex-direction: column; background: #d7e5fa; }
.pane { display: flex; flex-direction: column; background: #fff; flex: 0 0 324px; }
.pane.data { flex: 1; min-height: 0; margin-top: 4px; }
.phead { height: 24px; flex: none; display: flex; align-items: center; padding: 0 8px 0 5px; background: linear-gradient(#dbe8fb, #c4d9f7 50%, #8db0e6); }
.phead h2 { flex: 1; padding-left: 7px; }
.phead button { margin-left: 7px; }
.ptools { height: 26px; flex: none; display: flex; align-items: center; margin-left: 3px; padding-left: 1px; background: linear-gradient(#dfebfc, #c0d6f7 50%, #80a7e1); border-bottom: 1px solid #3d66a8; }
.ptools.tall { height: 27px; border-bottom-color: #e8f1ff; }
.ptools.flat { background: #80a8e2; }
.tree { flex: 1; list-style: none; font-weight: 600; }
.tree li { height: 18px; display: flex; align-items: center; padding-left: 22px; gap: 6px; position: relative; }
.tree .rule { font-family: "DejaVu Sans", sans-serif; font-weight: 700; }
.tree li::before { content: ""; position: absolute; left: 11px; top: 0; width: 11px; height: 10px; border-left: 1px dotted #888; border-bottom: 1px dotted #888; }
.tree li:not(:last-child)::after { content: ""; position: absolute; left: 11px; top: 9px; height: 9px; border-left: 1px dotted #888; }
.tree li:first-child::before { border-left: 0; }
.tree li.exp::after { content: ""; left: 7px; top: 5px; width: 9px; height: 9px; border: 1px solid #8a95a5; background: linear-gradient(#3a55a0, #3a55a0) center / 5px 1px no-repeat, linear-gradient(#3a55a0, #3a55a0) center / 1px 5px no-repeat, #f4f6fa; }
.tabs { height: 23px; flex: none; display: flex; padding-left: 2px; border-top: 2px solid #f2b04c; background: linear-gradient(#f8fbff, #c9dcf8); }
.tabs button { height: 19px; display: flex; align-items: center; gap: 2px; padding: 0 2px 0 4px; background: linear-gradient(#a9c6f6, #c8dcfa); border: 1px solid #33589c; border-top: 0; border-radius: 0 0 3px 3px; }
.tabs .act { margin-left: -1px; background: linear-gradient(#ffb96b, #ffe0b4); }
.note { flex: 1; padding: 6px 0; line-height: 15px; text-align: center; }

.main { flex: 1; min-width: 0; display: flex; flex-direction: column; padding-left: 6px; background: #d7e5fa; }
.doctabs { height: 20px; flex: none; display: flex; align-items: flex-end; background: linear-gradient(#c0d6f8, #eef4fe); }
.doctab { height: 18px; width: 78px; padding-left: 18px; font-weight: 600; background: linear-gradient(#fffdf5, #ffd880); clip-path: polygon(0 100%, 17px 0, 100% 0, 100% 100%); }
.docnav { margin-left: auto; display: flex; gap: 5px; align-self: center; padding-right: 4px; }
.view { flex: 1; min-height: 0; border: 2px solid #ffd36e; border-top: 3px solid #e5b75c; border-bottom-color: #e5b75c; outline: 1px solid #4a70b4; outline-offset: -1px; background: linear-gradient(#000, #0040c0); }
.model { width: 100%; height: 100%; overflow: hidden; }
.curves { fill: none; stroke: #0ff; shape-rendering: crispEdges; }
.points { stroke: #ff0; shape-rendering: crispEdges; }
.labels { fill: #fff; font: 12px "Liberation Sans", sans-serif; }
.messages { flex: none; height: 36px; padding-top: 7px; }
.messages .phead { height: 22px; }
.messages .phead h2 { padding-left: 6px; }
.log { height: 7px; overflow: hidden; background: #fff; }
.log p { margin-top: -6px; }

.status { height: 20px; flex: none; display: flex; justify-content: space-between; align-items: center; padding: 1px 8px 0 3px; background: #f0f0f0; }
.counts { display: flex; gap: 14px; padding-left: 8px; border-left: 1px solid #6f8fc4; }

.task { height: 30px; flex: none; position: relative; display: flex; align-items: center; color: #fff; background: linear-gradient(#9a9d9f, #5c6062 20%, #34383b 48%, #080b0e 52%, #020304); border-top: 1px solid #55595c; }
.orb { position: absolute; left: 9px; top: -5px; }
.orb svg { width: 42px; height: 42px; }
.quick { display: flex; gap: 7px; padding-left: 65px; width: 162px; flex: none; }
.more { margin: -14px 0 0 10px; font-size: 16px; }
.tasks { display: flex; gap: 4px; flex: 1; min-width: 0; }
.tasks button { flex: 0 1 143px; min-width: 0; height: 27px; display: flex; align-items: center; gap: 4px; padding: 0 7px; overflow: hidden; border: 1px solid #63686c; border-radius: 3px; box-shadow: inset 0 0 0 1px #22262a; background: linear-gradient(#8b8f92, #4e5356 45%, #0c1116 50%, #05080c); }
.tasks .cur { background: linear-gradient(#2a2c2e, #0c0e10 50%, #000); }
.tray { display: flex; align-items: center; gap: 2px; padding-right: 11px; flex: none; }
.lang { margin-right: 10px; }
.brk { margin-left: 9px; }
.tray time { margin-left: 4px; }
```
